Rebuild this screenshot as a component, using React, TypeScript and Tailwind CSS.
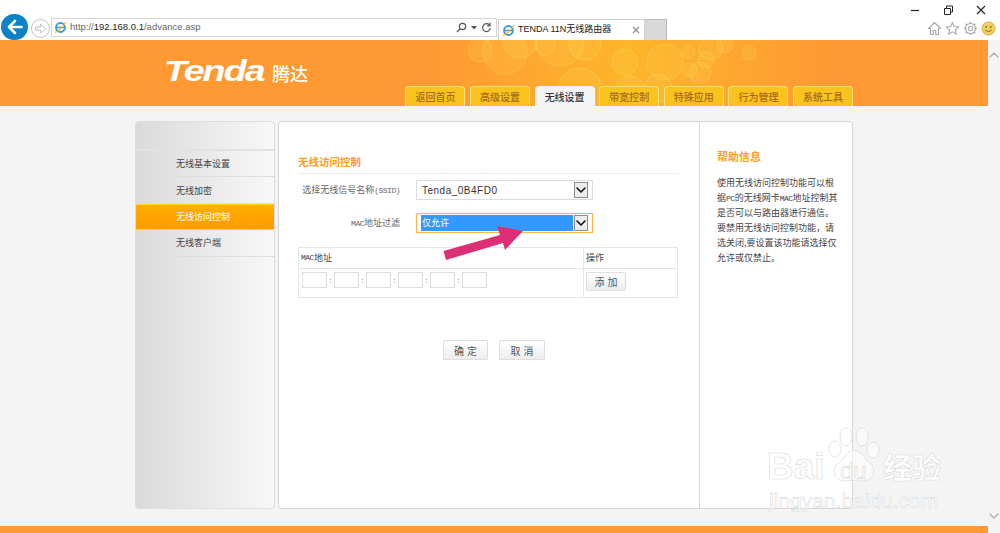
import React from "react";

const tabs = ["返回首页", "高级设置", "无线设置", "带宽控制", "特殊应用", "行为管理", "系统工具"];
const side = ["无线基本设置", "无线加密", "无线访问控制", "无线客户端"];
const bubbles: [number, number, number][] = [
  [480, 50, 12], [505, 52, 22], [520, 40, 18], [560, 42, 24], [585, 44, 16], [625, 62, 13], [630, 92, 16], [665, 62, 18],
  [688, 52, 7], [706, 60, 8], [711, 48, 12], [725, 45, 8], [749, 53, 7], [690, 70, 7], [700, 73, 11], [658, 88, 14], [580, 90, 22], [545, 45, 10],
];

function Chevron({ className = "" }: { className?: string }) {
  return (
    <svg className={className} width="12" height="12" viewBox="0 0 12 12" fill="none" stroke="currentColor" strokeLinecap="round" strokeLinejoin="round">
      <path d="M2 4 L6 8 L10 4" strokeWidth="1.6" />
    </svg>
  );
}

function Mono({ children }: { children: React.ReactNode }) {
  return <span className="font-['Liberation_Mono',monospace] text-[8px] tracking-[-0.5px]">{children}</span>;
}

function SelectBox({ text, active }: { text: string; active?: boolean }) {
  return (
    <div className={`ml-[16px] flex h-[20px] w-[177px] items-center border bg-white pr-[4px] pl-[4px] ${active ? "border-[#ffb347]" : "border-[#dcdcdc]"}`}>
      <div className={`flex h-[16px] flex-1 items-center ${active ? "bg-[#3399ff] pl-[1px] text-[9px] text-white" : "pl-[1px] font-['Liberation_Sans',sans-serif] text-[10px] tracking-[0.5px] text-[#333333]"}`}>{text}</div>
      <div className="ml-[1px] flex h-[16px] w-[14px] items-center justify-center border border-[#8f8f8f] bg-[#ececec] text-[#111111]">
        <Chevron />
      </div>
    </div>
  );
}

function Btn({ text, w, h }: { text: string; w: string; h: string }) {
  return (
    <div className={`flex ${w} ${h} items-center justify-center rounded-[1px] border border-[#dedede] bg-gradient-to-b from-white to-[#ededed] pl-[3px] text-[10px] tracking-[3px] text-[#555555]`}>{text}</div>
  );
}

function IeIcon() {
  return (
    <svg width="13" height="13" viewBox="0 0 13 13" fill="none" className="shrink-0">
      <circle cx="6.5" cy="6.5" r="4.4" stroke="#3b9be0" strokeWidth="2" />
      <path d="M2.5 6.5 H10.5" stroke="#3b9be0" strokeWidth="1.5" />
      <path d="M1 11 C3 12 9 6 12 1" stroke="#f0b429" strokeWidth="1.2" />
    </svg>
  );
}

export default function App() {
  return (
    <div className="relative flex h-[533px] w-[1000px] flex-col overflow-hidden bg-white font-['Noto_Sans_CJK_SC','Liberation_Sans',sans-serif]">
      <div className="absolute left-[705px] top-[-4px] h-[5px] w-[210px] bg-white shadow-[0_1px_3px_rgba(0,0,0,0.55)]" />

      {/* browser chrome */}
      <div className="relative flex h-[40px] shrink-0 items-end bg-white">
        <div className="ml-[1px] flex h-[26px] w-[27px] items-center justify-center rounded-full bg-[#0d83c6] text-white">
          <svg width="18" height="18" viewBox="0 0 18 18" fill="none" stroke="currentColor" strokeWidth="2.6" strokeLinecap="round" strokeLinejoin="round">
            <path d="M15.5 9 H3 M9 3 L3 9 L9 15" />
          </svg>
        </div>
        <div className="ml-[3px] mb-[2px] flex h-[19px] w-[19px] items-center justify-center rounded-full border border-[#c4c4c4] text-[#c0c0c0]">
          <svg width="13" height="13" viewBox="0 0 13 13" fill="none" stroke="currentColor" strokeWidth="1" strokeLinejoin="round">
            <path d="M1.5 5 H6.5 V2 L11.5 6.5 L6.5 11 V8 H1.5 Z" />
          </svg>
        </div>
        <div className="ml-[1px] mb-[3px] flex h-[19px] w-[446px] items-center border border-[#d6d6d6] pl-[2px] font-['Liberation_Sans',sans-serif] text-[9.5px] text-[#666666]">
          <IeIcon />
          <span className="ml-[3px]">http://<span className="text-[#222222]">192.168.0.1</span>/advance.asp</span>
          <div className="ml-auto mr-[4px] flex items-center gap-[4px] text-[#555555]">
            <svg width="11" height="11" viewBox="0 0 11 11" fill="none" stroke="currentColor" strokeWidth="1.2"><circle cx="6.5" cy="4.5" r="3.2" /><path d="M4 7 L1 10" /></svg>
            <svg width="6" height="4" viewBox="0 0 6 4" fill="currentColor"><path d="M0 0 H6 L3 3.5 Z" /></svg>
            <svg width="11" height="11" viewBox="0 0 11 11" fill="none" stroke="currentColor" strokeWidth="1.2"><path d="M8.8 3.5 A3.9 3.9 0 1 0 9.4 6" /><path d="M9 0.8 V3.8 H6.2" /></svg>
          </div>
        </div>
        <div className="ml-[1px] flex h-[21px] w-[147px] items-center border border-b-0 border-[#d0d0d0] pl-[3px] pr-[4px] text-[9px] text-[#222222]">
          <IeIcon />
          <span className="ml-[3px] whitespace-nowrap font-['Liberation_Sans','Noto_Sans_CJK_SC',sans-serif]">TENDA 11N无线路由器</span>
          <svg className="ml-auto text-[#909090]" width="8" height="8" viewBox="0 0 8 8" stroke="currentColor" strokeWidth="1.3"><path d="M1 1 L7 7 M7 1 L1 7" /></svg>
        </div>
        <div className="h-[21px] w-[22px] border border-b-0 border-l-0 border-[#b9b9b9] bg-[#d9d9d9]" />
        <div className="ml-auto mb-[4px] mr-[4px] flex items-center gap-[3px] text-[#a8a8a8]">
          <svg width="15" height="15" viewBox="0 0 15 15" fill="none" stroke="currentColor" strokeWidth="1.1" strokeLinejoin="round"><path d="M1.5 7.5 L7.5 1.5 L13.5 7.5 H11.5 V13.5 H8.8 V9.5 H6.2 V13.5 H3.5 V7.5 Z" /></svg>
          <svg width="15" height="15" viewBox="0 0 15 15" fill="none" stroke="currentColor" strokeWidth="1.1" strokeLinejoin="round"><path d="M7.5 1.5 L9.3 5.5 L13.7 5.9 L10.4 8.8 L11.4 13.2 L7.5 10.9 L3.6 13.2 L4.6 8.8 L1.3 5.9 L5.7 5.5 Z" /></svg>
          <svg width="15" height="15" viewBox="0 0 15 15" fill="none" stroke="currentColor" strokeWidth="1.1"><circle cx="7.5" cy="7.5" r="2.2" /><circle cx="7.5" cy="7.5" r="5" /><path d="M7.5 1 V2.5 M7.5 12.5 V14 M1 7.5 H2.5 M12.5 7.5 H14 M2.9 2.9 L4 4 M11 11 L12.1 12.1 M12.1 2.9 L11 4 M4 11 L2.9 12.1" strokeWidth="1.6" /></svg>
          <svg width="15" height="15" viewBox="0 0 15 15" fill="none"><circle cx="7.5" cy="7.5" r="6.5" fill="#f2cf60" stroke="#d9b03c" /><circle cx="5.2" cy="6" r="0.9" fill="#8a6d1a" /><circle cx="9.8" cy="6" r="0.9" fill="#8a6d1a" /><path d="M4.5 9.3 Q7.5 11.8 10.5 9.3" stroke="#8a6d1a" /></svg>
        </div>
        <div className="absolute right-[14px] top-[5px] flex items-center gap-[23px] text-[#222222]">
          <svg width="10" height="10" viewBox="0 0 10 10" stroke="currentColor"><path d="M1 5.5 H9" strokeWidth="1.2" /></svg>
          <svg width="10" height="10" viewBox="0 0 10 10" fill="none" stroke="currentColor"><path d="M1.5 3.5 H7.5 V9.5 H1.5 Z M3.5 3.5 V1 H9.5 V7 H7.5" /></svg>
          <svg width="10" height="10" viewBox="0 0 10 10" stroke="currentColor"><path d="M1 1 L9 9 M9 1 L1 9" strokeWidth="1.1" /></svg>
        </div>
      </div>

      {/* page and scrollbar */}
      <div className="flex min-h-0 flex-1 bg-[#f4f4f4]">
        <div className="flex w-[988px] flex-col">
          {/* orange header */}
          <div className="relative flex h-[66px] shrink-0 justify-end overflow-hidden bg-[#ff9933] pr-[135px]">
            <div className="absolute inset-y-0 left-[430px] w-[400px] bg-gradient-to-r from-[#ff9933] via-[#fdb52a] to-[#ff9933]" />
            <svg className="absolute left-0 top-[-40px]" width="988" height="106" fill="#ffd75a" fillOpacity="0.16" stroke="#ffe27a" strokeOpacity="0.3">
              {bubbles.map(([x, y, r], i) => (
                <circle key={i} cx={x} cy={y} r={r} />
              ))}
            </svg>
            <div className="absolute left-[164px] top-[15px] flex items-center text-white">
              <span className="w-[102px] origin-left scale-x-125 font-['Liberation_Sans',sans-serif] text-[30px] font-bold italic leading-[32px] tracking-[-1.5px]">Tenda</span>
              <span className="ml-[6px] mt-[3px] text-[18px] font-medium leading-[22px]">腾达</span>
            </div>
            <div className="relative mt-[46px] flex gap-[4.6px]">
              {tabs.map((t, i) => (
                <div key={t} className={`flex h-[20px] w-[60px] items-center justify-center rounded-t-[4px] border border-b-0 text-[10px] font-medium ${i === 2 ? "border-[#f4f4f4] bg-[#f4f4f4] text-[#333333]" : "border-[#ffdf7e] bg-[#f9c21c] text-[#a86a1c]"}`}>
                  {t}
                </div>
              ))}
            </div>
          </div>

          {/* content */}
          <div className="flex flex-1 gap-[3px] pl-[135px] pt-[15px]">
            <div className="flex h-[388px] w-[140px] flex-col overflow-hidden rounded-[4px] border border-[#dddddd] bg-gradient-to-r from-[#dadada] to-[#f8f8f8]">
              <div className="h-[29px] shrink-0 border-b-2 border-[#e2e2e2]" />
              {side.map((s, i) => (
                <div key={s} className={`flex h-[26.4px] shrink-0 items-center pl-[40px] text-[9px] ${i === 2 ? "border-y border-[#ffcf33] bg-gradient-to-b from-[#ffb000] to-[#ff9900] text-white" : i < 2 ? "border-b border-[#dedede] pt-[1px] text-[#444444]" : "border-b border-[#dedede] text-[#444444]"}`}>
                  {s}
                </div>
              ))}
            </div>

            <div className="flex h-[388px] w-[575px] overflow-hidden rounded-[4px] border border-[#d6d6d6] bg-white">
              <div className="w-[421px] shrink-0 border-r border-[#d6d6d6] pl-[19px] pr-[20px] pt-[31px]">
                <div className="h-[21px] border-b border-[#eeeeee] text-[10.5px] font-bold leading-[17px] text-[#ff9c1a]">无线访问控制</div>
                <div className="mt-[6px] flex items-center">
                  <div className="w-[102px] whitespace-nowrap text-right text-[9px] text-[#666666]">选择无线信号名称<Mono>(SSID)</Mono></div>
                  <SelectBox text="Tenda_0B4FD0" />
                </div>
                <div className="mt-[13px] flex items-center">
                  <div className="w-[102px] whitespace-nowrap text-right text-[9px] text-[#666666]"><Mono>MAC</Mono>地址过滤</div>
                  <SelectBox text="仅允许" active />
                </div>
                <div className="mt-[14px] w-[380px] border border-[#e6e6e6] text-[9px] text-[#444444]">
                  <div className="flex h-[21px] border-b border-[#e6e6e6]">
                    <div className="flex w-[285px] items-center border-r border-[#e6e6e6] pl-[2px]"><Mono>MAC</Mono>地址</div>
                    <div className="flex items-center pl-[2px]">操作</div>
                  </div>
                  <div className="flex h-[28px]">
                    <div className="flex w-[285px] border-r border-[#e6e6e6] pl-[3px] pt-[3px]">
                      {[0, 1, 2, 3, 4, 5].map((n) => (
                        <div key={n} className="flex h-[16px] items-center text-[#888888]">
                          <div className="h-[16px] w-[25px] border border-[#dddddd] bg-white" />
                          {n < 5 && <span className="w-[7px] text-center text-[8px] leading-none">:</span>}
                        </div>
                      ))}
                    </div>
                    <div className="pl-[2px] pt-[3px]">
                      <Btn text="添加" w="w-[40px]" h="h-[19px]" />
                    </div>
                  </div>
                </div>
                <div className="ml-[145px] mt-[42px] flex gap-[11px]">
                  <Btn text="确定" w="w-[45px]" h="h-[20px]" />
                  <Btn text="取消" w="w-[46px]" h="h-[20px]" />
                </div>
              </div>
              <div className="pl-[17px] pt-[25px]">
                <div className="text-[11px] font-bold leading-[18px] text-[#ffa126]">帮助信息</div>
                <div className="mt-[11px] whitespace-nowrap text-[9px] leading-[14.7px] text-[#444444]">
                  使用无线访问控制功能可以根<br />
                  据<Mono>PC</Mono>的无线网卡<Mono>MAC</Mono>地址控制其<br />
                  是否可以与路由器进行通信。<br />
                  要禁用无线访问控制功能，请<br />
                  选关闭,要设置该功能请选择仅<br />
                  允许或仅禁止。
                </div>
              </div>
            </div>
          </div>

          <div className="h-[7px] shrink-0 bg-[#ff9933]" />
        </div>
        <div className="flex w-[12px] flex-col items-center justify-between pb-[11px] pt-[9px] text-[#b5b5b5]">
          <Chevron className="rotate-180" />
          <Chevron />
        </div>
      </div>

      {/* pink arrow */}
      <svg className="absolute left-[440px] top-[222px]" width="90" height="42" viewBox="0 0 90 42">
        <path d="M3.5 29 L60 13 L57 4 L83 9 L65 28 L63 21 L6 38 Z" fill="#dc2f75" />
      </svg>

      {/* watermark */}
      <div className="pointer-events-none absolute left-[767px] top-[426px] h-[90px] w-[180px]">
        <svg className="absolute left-[60px] top-0" width="54" height="58" viewBox="0 0 54 58" fill="#ffffff" fillOpacity="0.55" stroke="#dcdcdc" strokeWidth="0.8">
          <ellipse cx="8" cy="23" rx="6" ry="8" />
          <ellipse cx="19" cy="11" rx="6" ry="9" />
          <ellipse cx="35" cy="11" rx="6" ry="9" />
          <ellipse cx="46" cy="24" rx="6" ry="8" />
          <path d="M27 24 C33 24 36 31 43 37 C51 45 45 56 35 55 C30 54 24 54 19 55 C9 56 3 45 11 38 C18 32 21 24 27 24 Z" />
        </svg>
        <span className="absolute left-0 top-[22px] font-['Liberation_Sans',sans-serif] text-[37px] font-bold leading-none text-white [-webkit-text-stroke:0.6px_#d8d8d8]">Bai</span>
        <span className="absolute left-[73px] top-[33px] font-['Liberation_Sans',sans-serif] text-[24px] leading-none text-white [-webkit-text-stroke:0.5px_#d0d0d0]">du</span>
        <span className="absolute left-[116px] top-[26px] whitespace-nowrap text-[29px] font-bold leading-none text-white [-webkit-text-stroke:0.5px_#d8d8d8]">经验</span>
        <span className="absolute left-[2px] top-[64px] whitespace-nowrap font-['Liberation_Sans',sans-serif] text-[21px] leading-none text-white [-webkit-text-stroke:0.5px_#d6d6d6]">jingyan.baidu.com</span>
      </div>
    </div>
  );
}
